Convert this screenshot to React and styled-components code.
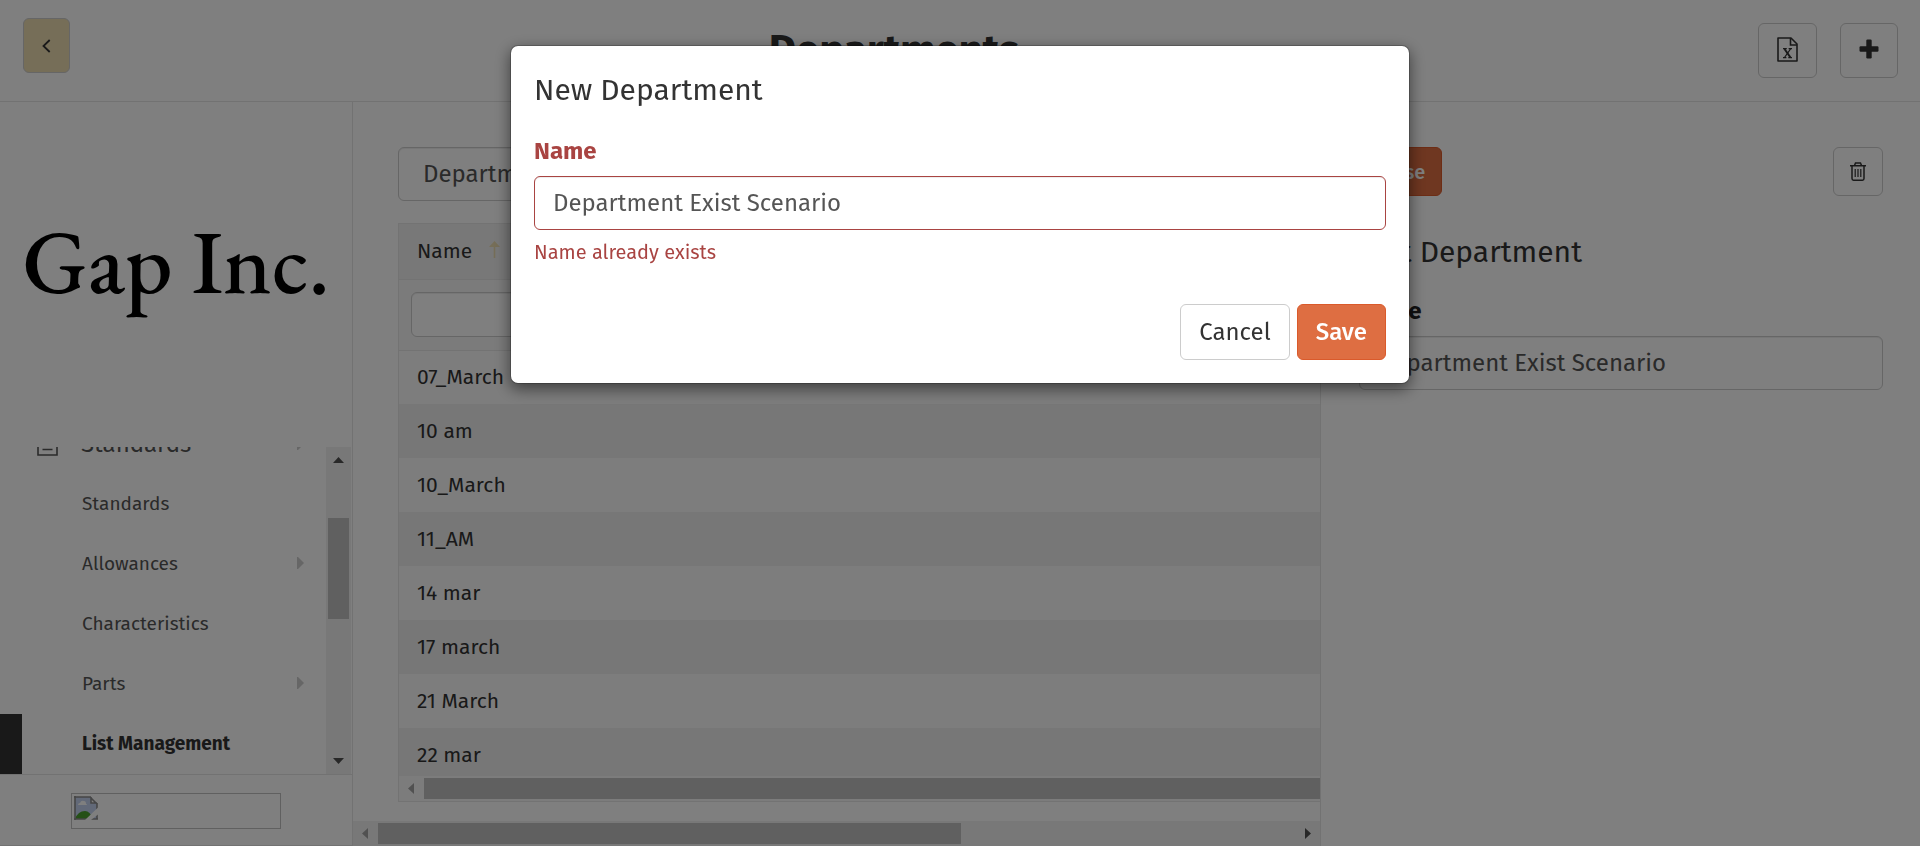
import React from "react";
import styled, { createGlobalStyle, css } from "styled-components";

const GlobalStyle = createGlobalStyle`
  *, *::before, *::after { box-sizing: border-box; }
  body {
    margin: 0;
    background: #fff;
    color: #333;
    font-family: "Fira Sans", "Noto Sans", sans-serif;
    font-size: 21px;
    line-height: 27px;
  }
  button, input, select { font-family: inherit; margin: 0; }
  h1, h2, p { margin: 0; }
`;

/* ---------- page frame ---------- */

const Page = styled.div`
  display: flex;
  flex-direction: column;
  height: 100vh;
  overflow: hidden;
`;

const TopBar = styled.header`
  display: flex;
  align-items: flex-start;
  flex: none;
  height: 102px;
  padding: 18px 22px 0 23px;
  border-bottom: 1px solid #e5e5e5;
`;

const PageTitle = styled.h1`
  flex: 1;
  padding-right: 40px;
  padding-top: 5px;
  text-align: center;
  font-size: 42px;
  line-height: 54px;
  font-weight: 700;
`;

const TopActions = styled.div`
  display: flex;
  gap: 23px;
  padding-top: 5px;
`;

const Columns = styled.div`
  display: grid;
  grid-template-columns: 353px minmax(0, 967fr) minmax(0, 600fr);
  grid-template-rows: minmax(0, 1fr);
  flex: 1;
  min-height: 0;
`;

/* ---------- controls ---------- */

const Button = styled.button`
  display: inline-flex;
  align-items: center;
  justify-content: center;
  height: ${(p) => (p.$small ? 49 : 55)}px;
  padding: 0 ${(p) => (p.$small ? 16 : 18)}px;
  border: 1px solid #ccc;
  border-radius: 6px;
  background: #fff;
  color: #333;
  font-size: ${(p) => (p.$small ? 20 : 24)}px;
  line-height: 30px;
  ${(p) =>
    p.$tone === "sand" &&
    css`
      background: #ecdcb0;
    `}
  ${(p) =>
    p.$tone === "primary" &&
    css`
      background: #de6e42;
      border-color: #da5a2b;
      color: #fff;
      font-weight: 500;
    `}
`;

const TextInput = styled.input`
  display: block;
  width: 100%;
  height: ${(p) => (p.$compact ? 45 : 54)}px;
  padding: 0 18px;
  border: 1px solid ${(p) => (p.$invalid ? "#a94442" : "#ccc")};
  border-radius: 6px;
  background: #fff;
  box-shadow: inset 0 1px 1px rgba(0, 0, 0, 0.075);
  color: #555;
  font-size: 24px;
  outline: none;
`;

const Select = styled.select`
  appearance: none;
  width: 400px;
  height: 54px;
  padding: 0 24px;
  border: 1px solid #ccc;
  border-radius: 6px;
  background: #fff;
  box-shadow: inset 0 1px 1px rgba(0, 0, 0, 0.075);
  color: #555;
  font-family: inherit;
  font-size: 24px;
`;

const FieldLabel = styled.label`
  display: block;
  margin-bottom: 9px;
  color: ${(p) => (p.$invalid ? "#a94442" : "#222")};
  font-size: 24px;
  line-height: 32px;
  font-weight: 700;
`;

const PanelTitle = styled.h2`
  color: #333;
  font-size: 30px;
  line-height: 40px;
  font-weight: 400;
`;

/* ---------- sidebar ---------- */

const Sidebar = styled.aside`
  display: flex;
  flex-direction: column;
  border-right: 1px solid #e5e5e5;
`;

const Brand = styled.div`
  display: flex;
  align-items: center;
  justify-content: center;
  flex: none;
  height: 345px;
  padding-bottom: 28px;
  color: #000;
  font-family: "EB Garamond", "Liberation Serif", serif;
  font-size: 90px;
  font-weight: 500;
  line-height: 100px;
  white-space: nowrap;
`;

const MenuArea = styled.div`
  display: flex;
  flex: 1;
  min-height: 0;
  padding-right: 1px;
`;

const Menu = styled.nav`
  display: flex;
  flex-direction: column;
  justify-content: flex-end;
  flex: 1;
  overflow: hidden;
`;

const MenuLink = styled.a`
  display: flex;
  align-items: center;
  flex: none;
  height: 60px;
  padding: 0 22px 2px ${(p) => (p.$active ? 60 : 82)}px;
  color: ${(p) => (p.$active ? "#333" : "#555")};
  border-left: ${(p) => (p.$active ? 22 : 0)}px solid #333;
  font-size: 19px;
  font-weight: ${(p) => (p.$active ? 700 : 400)};
  text-decoration: none;
`;

const MenuGroup = styled(MenuLink)`
  gap: 23px;
  padding-left: 37px;
  padding-bottom: 0;
  font-size: 24px;
`;

const MenuText = styled.span`
  flex: 1;
`;

const SidebarFooter = styled.div`
  display: flex;
  justify-content: center;
  flex: none;
  height: 72px;
  padding-top: 18px;
  border-top: 1px solid #e5e5e5;
  border-bottom: 1px solid #e5e5e5;
`;

const MissingImage = styled.div`
  width: 210px;
  height: 36px;
  padding: 2px;
  border: 1px solid #c0c0c0;
`;

/* ---------- scrollbars ---------- */

const ScrollTrack = styled.div`
  display: flex;
  align-items: center;
  flex: none;
  overflow: hidden;
  background: ${(p) => p.$tint || "#f1f1f1"};
  svg {
    flex: none;
  }
  ${(p) =>
    p.$vertical
      ? css`
          flex-direction: column;
          width: 25px;
          padding: 10px 0;
        `
      : css`
          height: 25px;
          padding: 0 9px;
        `}
`;

const ScrollThumb = styled.div`
  background: #c1c1c1;
  ${(p) =>
    p.$vertical
      ? css`
          width: 21px;
          height: 101px;
          margin: 55px 0 auto;
        `
      : css`
          height: 21px;
          margin-left: 10px;
          flex: none;
          width: ${p.$width};
        `}
`;

const ScrollGap = styled.div`
  flex: 1;
`;

/* ---------- list column ---------- */

const ListColumn = styled.main`
  display: flex;
  flex-direction: column;
  min-width: 0;
  overflow: hidden;
`;

const ListBody = styled.div`
  display: flex;
  flex-direction: column;
  flex: 1;
  min-height: 0;
  padding: 45px 0 19px 45px;
`;

const GridBox = styled.div`
  display: flex;
  flex-direction: column;
  flex: 1;
  min-height: 0;
  margin-top: 22px;
  border: 1px solid #e7e7e7;
  border-right: 0;
`;

const GridScroll = styled.div`
  flex: 1;
  min-height: 0;
  overflow: hidden;
`;

const Table = styled.table`
  width: 100%;
  border-collapse: collapse;
  text-align: left;
`;

const HeadCell = styled.th`
  height: 55px;
  padding: 0 18px;
  background: #f1f1f1;
  border-bottom: 1px solid #e7e7e7;
  font-weight: 400;
`;

const HeadContent = styled.span`
  display: flex;
  align-items: center;
  gap: 17px;
`;

const FilterCell = styled.td`
  height: 71px;
  padding: 0 12px;
  background: #f7f7f7;
  border-bottom: 1px solid #e7e7e7;
`;

const Row = styled.tr`
  background: #fbfbfb;
  &:nth-child(even) {
    background: #eeeeee;
  }
`;

const Cell = styled.td`
  height: 54px;
  padding: 0 18px;
`;

/* ---------- detail column ---------- */

const DetailColumn = styled.section`
  min-width: 0;
  padding: 45px 37px 0 38px;
  border-left: 1px solid #e5e5e5;
`;

const DetailActions = styled.div`
  display: flex;
  justify-content: space-between;
  margin-bottom: 36px;
`;

const DetailTitle = styled(PanelTitle)`
  margin-bottom: 23px;
`;

/* ---------- dialog ---------- */

const Backdrop = styled.div`
  position: fixed;
  inset: 0;
  display: flex;
  align-items: flex-start;
  justify-content: center;
  padding-top: 45px;
  background: rgba(0, 0, 0, 0.5);
`;

const Dialog = styled.form`
  width: 900px;
  max-width: 96vw;
  padding: 24px 23px 23px;
  border: 1px solid rgba(0, 0, 0, 0.2);
  border-radius: 8px;
  background: #fff;
  background-clip: padding-box;
  box-shadow: 0 5px 15px rgba(0, 0, 0, 0.5);
`;

const DialogTitle = styled(PanelTitle)`
  margin-bottom: 25px;
`;

const ErrorText = styled.p`
  margin-top: 9px;
  color: #a94442;
  font-size: 20px;
  line-height: 27px;
`;

const DialogActions = styled.div`
  display: flex;
  justify-content: flex-end;
  gap: 7px;
  margin-top: 38px;
`;

const DialogButton = styled(Button)`
  height: 56px;
`;

/* ---------- drawings ---------- */

const Arrow = ({ dir, color = "#505050" }) => {
  const tall = dir === "left" || dir === "right";
  const d = {
    up: "M0 6 5.5 0 11 6z",
    down: "M0 0h11L5.500 6z",
    left: "M6 0v11L0 5.500z",
    right: "M0 0v11l6-5.500z",
  }[dir];
  return (
    <svg width={tall ? 6 : 11} height={tall ? 11 : 6} fill={color} aria-hidden="true">
      <path d={d} />
    </svg>
  );
};

const ChevronLeft = () => (
  <svg width="9" height="14" viewBox="0 0 9 14" fill="none" stroke="#333" strokeWidth="1.8" aria-hidden="true">
    <path d="M7.700 1 1.500 7l6.200 6" />
  </svg>
);

const ExcelFile = () => (
  <svg width="21" height="27" viewBox="0 0 21 27" fill="none" stroke="#333" strokeWidth="1.6" aria-hidden="true">
    <path d="M1 1h13l6 6v17H1z" strokeLinejoin="round" />
    <path d="M13.500 1v7H20" />
    <path d="M7.500 12l6 8.500" strokeWidth="2" />
    <path d="M13.500 12l-6 8.500M6 11.700h3.800M11.600 11.700H15M6 20.700h3.400M11.300 20.700H15" strokeWidth="1.300" />
  </svg>
);

const Plus = () => (
  <svg width="20" height="23" viewBox="0 0 20 23" fill="#333" aria-hidden="true">
    <rect x="0.500" y="7.300" width="19" height="5.400" rx="1.200" />
    <rect x="7.300" y="0.500" width="5.400" height="19" rx="1.200" />
  </svg>
);

const Trash = () => (
  <svg width="16" height="19" viewBox="0 0 16 19" fill="none" stroke="#333" strokeWidth="1.500" aria-hidden="true">
    <path d="M0 3.800h16M2 3.800v12.700q0 1.700 1.500 1.700h9q1.500 0 1.500-1.700V3.800M4.500 3.500l1-2.500h5l1 2.500" />
    <path d="M5.200 7v8M8 7v8M10.800 7v8" strokeWidth="1.200" />
  </svg>
);

const SortUp = () => (
  <svg width="11" height="20" viewBox="0 0 11 20" aria-hidden="true">
    <path d="M5.500 0 11 6H0z" fill="#ecdcb0" />
    <path d="M5.500 5v12" stroke="#ecdcb0" strokeWidth="1.600" />
  </svg>
);

const MenuCaret = () => (
  <svg width="7" height="12" viewBox="0 0 7 12" fill="#ccc" aria-hidden="true">
    <path d="M0 0h1l6 6-6 6H0z" />
  </svg>
);

const ListIcon = () => (
  <svg width="21" height="24" viewBox="0 0 21 24" fill="none" stroke="#555" strokeWidth="1.600" aria-hidden="true">
    <path d="M1 1h19v22H1zM5.500 7h10M5.500 12h10M5.500 17.500h10" />
  </svg>
);

const BrokenImage = () => (
  <svg width="24" height="24" viewBox="0 0 24 24" aria-hidden="true">
    <path d="M1 1h16l6 6v16H1z" fill="#c4d2f0" />
    <path d="M4 9q0-2 2-2 1-3 4-2 2 0 2 3 1 0 1 1z" fill="#fff" />
    <path d="M1 23q3-8 10-8 5 0 8 8z" fill="#4ba02f" />
    <path d="M17 1v6h6z" fill="#fff" />
    <path d="M1 0v24M0 1h17M16 1l7 7M23 7v16M17 1v6h6M0 23h24" fill="none" stroke="#8c8c8c" strokeWidth="1.600" />
    <path d="M24 11.500 11 24h6l7-5.500z" fill="#fff" />
  </svg>
);

/* ---------- content ---------- */

const menuItems = [
  { label: "Standards" },
  { label: "Allowances", nested: true },
  { label: "Characteristics" },
  { label: "Parts", nested: true },
  { label: "List Management", active: true },
];

const departments = ["07_March", "10 am", "10_March", "11_AM", "14 mar", "17 march", "21 March", "22 mar"];

export default function App() {
  return (
    <>
      <GlobalStyle />
      <Page>
        <TopBar>
          <Button $tone="sand" aria-label="Back">
            <ChevronLeft />
          </Button>
          <PageTitle>Departments</PageTitle>
          <TopActions>
            <Button aria-label="Export to Excel">
              <ExcelFile />
            </Button>
            <Button aria-label="Add department">
              <Plus />
            </Button>
          </TopActions>
        </TopBar>

        <Columns>
          <Sidebar>
            <Brand>Gap Inc.</Brand>
            <MenuArea>
              <Menu>
                <MenuGroup href="#standards">
                  <ListIcon />
                  <MenuText>Standards</MenuText>
                  <MenuCaret />
                </MenuGroup>
                {menuItems.map((item) => (
                  <MenuLink key={item.label} href="#list" $active={item.active}>
                    <MenuText>{item.label}</MenuText>
                    {item.nested && <MenuCaret />}
                  </MenuLink>
                ))}
              </Menu>
              <ScrollTrack $vertical>
                <Arrow dir="up" />
                <ScrollThumb $vertical />
                <Arrow dir="down" />
              </ScrollTrack>
            </MenuArea>
            <SidebarFooter>
              <MissingImage>
                <BrokenImage />
              </MissingImage>
            </SidebarFooter>
          </Sidebar>

          <ListColumn>
            <ListBody>
              <Select aria-label="List" defaultValue="Departments">
                <option>Departments</option>
              </Select>
              <GridBox>
                <GridScroll>
                  <Table>
                    <thead>
                      <tr>
                        <HeadCell>
                          <HeadContent>
                            Name
                            <SortUp />
                          </HeadContent>
                        </HeadCell>
                      </tr>
                      <tr>
                        <FilterCell>
                          <TextInput $compact aria-label="Filter by name" />
                        </FilterCell>
                      </tr>
                    </thead>
                    <tbody>
                      {departments.map((name) => (
                        <Row key={name}>
                          <Cell>{name}</Cell>
                        </Row>
                      ))}
                    </tbody>
                  </Table>
                </GridScroll>
                <ScrollTrack $tint="#f9f9f9">
                  <Arrow dir="left" color="#a3a3a3" />
                  <ScrollThumb $width="100%" />
                </ScrollTrack>
              </GridBox>
            </ListBody>
            <ScrollTrack>
              <Arrow dir="left" color="#a3a3a3" />
              <ScrollThumb $width="61.400%" />
              <ScrollGap />
              <Arrow dir="right" />
            </ScrollTrack>
          </ListColumn>

          <DetailColumn>
            <DetailActions>
              <Button $small $tone="primary">
                Close
              </Button>
              <Button $small aria-label="Delete department">
                <Trash />
              </Button>
            </DetailActions>
            <DetailTitle>Edit Department</DetailTitle>
            <FieldLabel htmlFor="edit-name">Name</FieldLabel>
            <TextInput id="edit-name" defaultValue="Department Exist Scenario" />
          </DetailColumn>
        </Columns>
      </Page>

      <Backdrop>
        <Dialog role="dialog" aria-modal="true" aria-labelledby="dialog-title" onSubmit={(e) => e.preventDefault()}>
          <DialogTitle id="dialog-title">New Department</DialogTitle>
          <FieldLabel htmlFor="new-name" $invalid>
            Name
          </FieldLabel>
          <TextInput
            id="new-name"
            $invalid
            aria-invalid="true"
            aria-describedby="new-name-error"
            defaultValue="Department Exist Scenario"
          />
          <ErrorText id="new-name-error">Name already exists</ErrorText>
          <DialogActions>
            <DialogButton type="button">Cancel</DialogButton>
            <DialogButton type="submit" $tone="primary">
              Save
            </DialogButton>
          </DialogActions>
        </Dialog>
      </Backdrop>
    </>
  );
}
